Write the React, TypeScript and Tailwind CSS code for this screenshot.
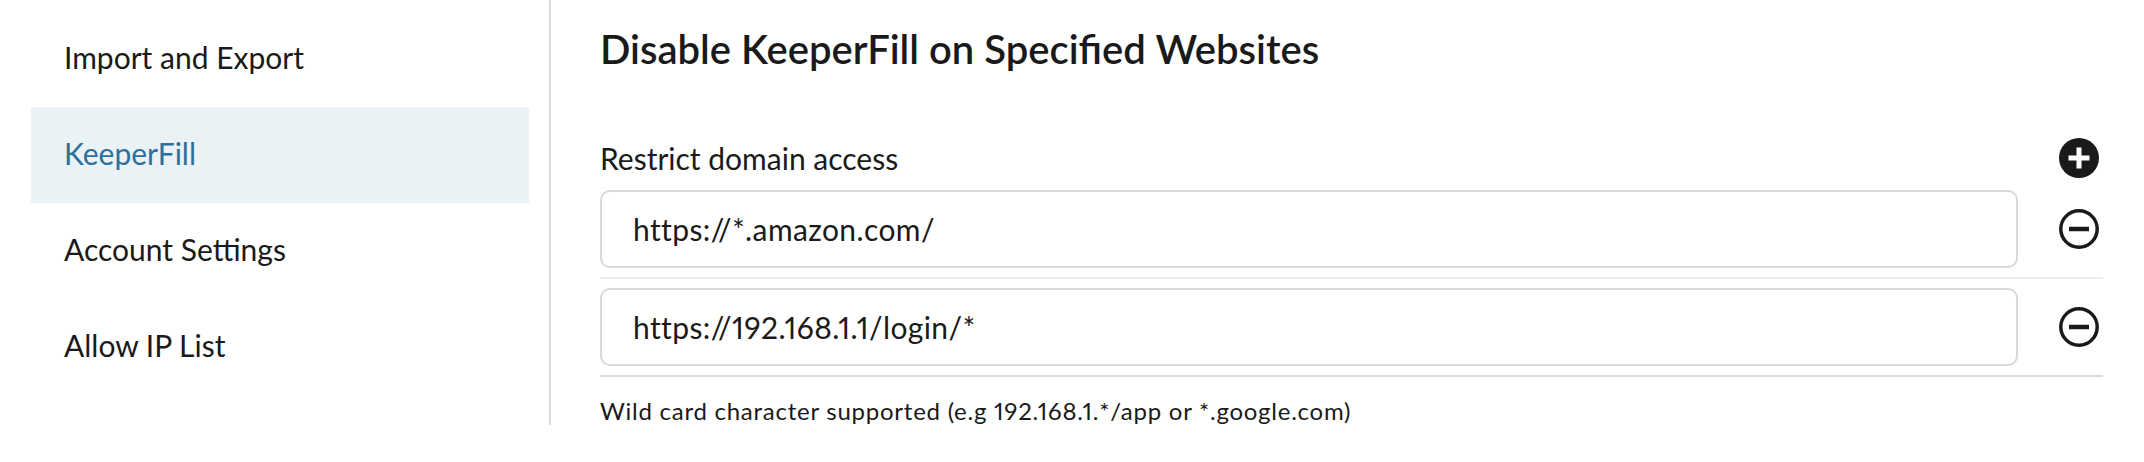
import React, { useState } from 'react';

const navItems = ['Import and Export', 'KeeperFill', 'Account Settings', 'Allow IP List'];

const PlusIcon: React.FC = () => (
    <svg width="40" height="40" viewBox="0 0 40 40">
        <circle cx="20" cy="20" r="20" fill="#1a1a1a" />
        <path d="M20 9.5v21M9.5 20h21" stroke="#fff" strokeWidth="5" />
    </svg>
);

const MinusIcon: React.FC = () => (
    <svg width="40" height="40" viewBox="0 0 40 40">
        <circle cx="20" cy="20" r="18.2" fill="none" stroke="#1a1a1a" strokeWidth="3.5" />
        <path d="M10 20h20" stroke="#1a1a1a" strokeWidth="4.5" />
    </svg>
);

const App: React.FC = () => {
    const [active] = useState('KeeperFill');
    const [domains, setDomains] = useState(['https://*.amazon.com/', 'https://192.168.1.1/login/*']);

    return (
        <div
            className="flex w-full bg-white text-[#1a1a1a] proportional-nums"
            style={{ fontFamily: 'Lato, "Noto Sans", sans-serif' }}
        >
            {/* sidebar */}
            <div className="w-[551px] shrink-0 border-r-2 border-[#dadada] pt-[11px] pb-[2px] pl-[31px] pr-[20px]">
                {navItems.map((item) => (
                    <div
                        key={item}
                        className={
                            item === active
                                ? 'flex h-[96px] items-center pl-[33px] pb-[3px] bg-[#eaf2f6] text-[#2e6f9c] text-[30px]'
                                : 'flex h-[96px] items-center pl-[33px] pb-[3px] text-[30px]'
                        }
                    >
                        {item}
                    </div>
                ))}
            </div>

            {/* main */}
            <div className="flex-1 pl-[49px] pr-[41px]">
                <div className="flex h-[98px] items-center text-[40px] font-semibold">
                    Disable KeeperFill on Specified Websites
                </div>
                <div className="mt-[40px] flex h-[40px] items-center justify-between">
                    <span className="text-[30px]">Restrict domain access</span>
                    <button className="mr-[4px]" onClick={() => setDomains([...domains, ''])}>
                        <PlusIcon />
                    </button>
                </div>
                <div className="mt-[12px]">
                    {domains.map((d, i) => (
                        <div
                            key={i}
                            className={
                                i === domains.length - 1
                                    ? 'flex items-center pb-[9px] pt-[9px] border-b-2 border-[#dcdcdc] first:pt-0'
                                    : 'flex items-center pb-[9px] pt-[9px] border-b-2 border-[#eeeeee] first:pt-0'
                            }
                        >
                            <input
                                value={d}
                                onChange={(e) => setDomains(domains.map((x, j) => (j === i ? e.target.value : x)))}
                                className="h-[78px] flex-1 rounded-[10px] border-2 border-[#d9d9d9] px-[31px] text-[30px] tracking-[0.4px] proportional-nums outline-none"
                            />
                            <div className="flex w-[85px] justify-end pr-[4px]">
                                <button onClick={() => setDomains(domains.filter((_, j) => j !== i))}>
                                    <MinusIcon />
                                </button>
                            </div>
                        </div>
                    ))}
                </div>
                <p className="mt-[19px] text-[24px] leading-[29px] tracking-[0.75px]">
                    Wild card character supported (e.g 192.168.1.*/app or *.google.com)
                </p>
            </div>
        </div>
    );
};

export default App;
